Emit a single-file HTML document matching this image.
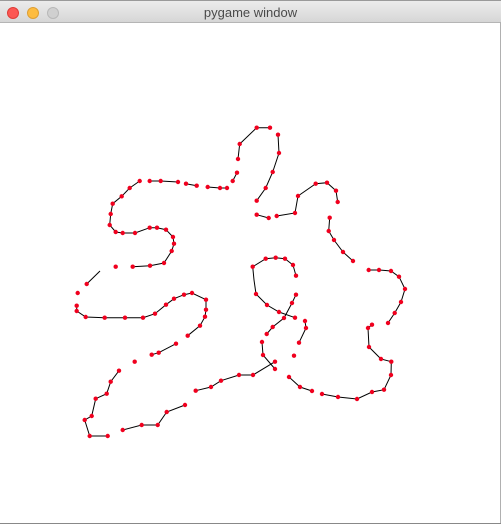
<!DOCTYPE html>
<html><head><meta charset="utf-8"><style>
html,body{margin:0;padding:0;width:501px;height:524px;overflow:hidden;background:#fff}
.bar{position:absolute;left:0;top:1px;width:501px;height:22px;background:linear-gradient(#ececec,#d6d6d6);border-bottom:1px solid #b5b5b5;box-sizing:border-box}
.t{position:absolute;top:4px;left:0;width:501px;text-align:center;font:13px "Liberation Sans",sans-serif;color:#4a4a4a}
.c{position:absolute;top:6px;width:12px;height:12px;border-radius:50%}
</style></head><body>
<div style="position:absolute;left:0;top:0;width:501px;height:1px;background:#9a9a9a"></div>
<div class="bar"><div class="t">pygame window</div>
<div class="c" style="left:7px;background:#fc5753;border:0.5px solid #df3d38;box-sizing:border-box"></div>
<div class="c" style="left:27px;background:#fdbc40;border:0.5px solid #de9f34;box-sizing:border-box"></div>
<div class="c" style="left:47px;background:#d0d0d0;border:0.5px solid #b8b8b8;box-sizing:border-box"></div>
</div>
<div style="position:absolute;left:500px;top:22px;width:1px;height:502px;background:#b0b0b0"></div>
<div style="position:absolute;left:0;top:523px;width:501px;height:1px;background:#888"></div>
<svg width="501" height="524" style="position:absolute;left:0;top:0" id="s">
<g fill="none" stroke="#000" stroke-width="1">
<polyline points="139.7,181 129.7,188 121.7,196.3 112.7,203.7 110.7,214 109.7,225 115.7,232 122.7,233 135,233 149.7,227.7 157,227.7 166,229.7 173,237 174,243.7 171.7,251 164,263 150,265.7 132.7,266.7"/>
<polyline points="149.7,181 160.7,181 178,182"/>
<polyline points="186,183.7 196.7,185.7"/>
<polyline points="207.7,187 220,188 227,188"/>
<polyline points="232.7,181 237,172.7"/>
<polyline points="238,159 239.7,144 256.7,127.7 270,127.7"/>
<polyline points="278,134.7 279,153 272.7,172 265.7,188 256.7,200.7"/>
<polyline points="256.7,214.7 268.7,218"/>
<polyline points="276.7,216 295,213 298,196 315.7,183.7 327,182.7 336,190.7 337.7,202"/>
<polyline points="329.7,217.7 328.7,231 334,240 343,252 353,261"/>
<polyline points="368.7,270 379,270 391,271 399,276.7 405,289 401,302 394.7,313 388,323"/>
<polyline points="296,275.7 293,265 285,258.7 275.7,257.7 265.7,258.7 252.7,266.7 254,280 256,294 267,305 279,312 295,317.7"/>
<polyline points="296,294.7 292,303 284,318 272.7,327 266.7,334"/>
<polyline points="305,321 306,328 299,342.7"/>
<polyline points="262,342 263,355 275,369"/>
<polyline points="275,361.7 253,375 239,375 221,380.7 211,387 195.7,390.7"/>
<polyline points="289,377 300,387 312,391"/>
<polyline points="322,394 338,397 357,399 372,392 384,389.7 391,375 391.3,361.7 381,359 369,347 368,328 372,324.7"/>
<polyline points="100,271 86.7,284"/>
<polyline points="76.7,305.7 76.7,311 85.7,317 104.7,317.7 125,317.7 143,317.7 155,313.7 166,304.7 174,298.7 184,294.7 192,293 206,299.7 206,309.7 205,316.7 200,325.7 187.7,335.7"/>
<polyline points="176,343.7 158.7,352.7 151.7,354.7"/>
<polyline points="119,370.7 110.7,381.7 106.7,393.7 95.7,398.7 91.7,416 84.7,420 89.7,436 107.7,436"/>
<polyline points="122.7,430 141.7,425 157.7,425 166.7,412 185,405"/>
</g>
<g fill="#f0001e" id="d"></g>
</svg>
<script>
var p=[139.7,181,129.7,188,121.7,196.3,112.7,203.7,110.7,214,109.7,225,115.7,232,122.7,233,135,233,149.7,227.7,157,227.7,166,229.7,173,237,174,243.7,171.7,251,164,263,150,265.7,132.7,266.7,115.7,266.7,149.7,181,160.7,181,178,182,186,183.7,196.7,185.7,207.7,187,220,188,227,188,232.7,181,237,172.7,238,159,239.7,144,256.7,127.7,270,127.7,278,134.7,279,153,272.7,172,265.7,188,256.7,200.7,256.7,214.7,268.7,218,276.7,216,295,213,298,196,315.7,183.7,327,182.7,336,190.7,337.7,202,329.7,217.7,328.7,231,334,240,343,252,353,261,368.7,270,379,270,391,271,399,276.7,405,289,401,302,394.7,313,388,323,296,275.7,293,265,285,258.7,275.7,257.7,265.7,258.7,252.7,266.7,256,294,267,305,279,312,295,317.7,296,294.7,292,303,284,318,272.7,327,266.7,334,305,321,306,328,299,342.7,294,355.7,262,342,263,355,275,369,275,361.7,253,375,239,375,221,380.7,211,387,195.7,390.7,289,377,300,387,312,391,322,394,338,397,357,399,372,392,384,389.7,391,375,391.3,361.7,381,359,369,347,368,328,372,324.7,86.7,284,77.7,293,76.7,305.7,76.7,311,85.7,317,104.7,317.7,125,317.7,143,317.7,155,313.7,166,304.7,174,298.7,184,294.7,192,293,206,299.7,206,309.7,205,316.7,200,325.7,187.7,335.7,176,343.7,158.7,352.7,151.7,354.7,134.7,361.7,119,370.7,110.7,381.7,106.7,393.7,95.7,398.7,91.7,416,84.7,420,89.7,436,107.7,436,122.7,430,141.7,425,157.7,425,166.7,412,185,405];
var g=document.getElementById('d'),h='';
for(var i=0;i<p.length;i+=2)h+='<circle cx="'+p[i]+'" cy="'+p[i+1]+'" r="2.2"/>';
g.innerHTML=h;
</script>
</body></html>
